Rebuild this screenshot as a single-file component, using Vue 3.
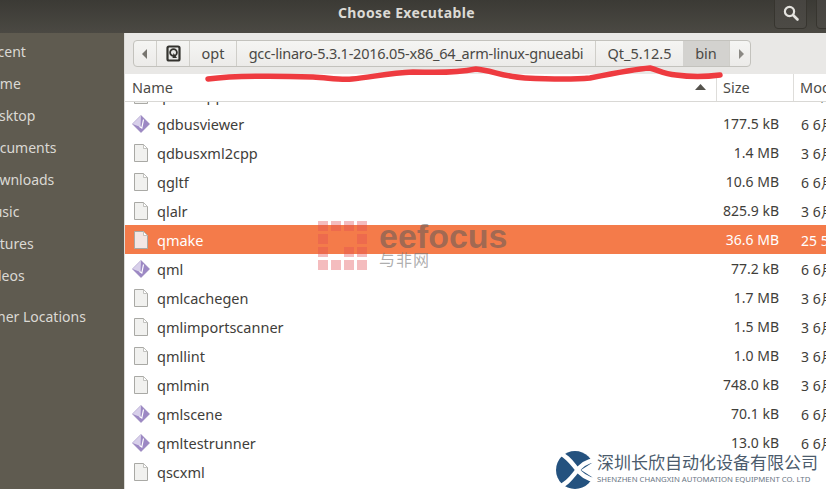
<script setup>
const places = [
  { label: 'Recent' }, { label: 'Home' }, { label: 'Desktop' }, { label: 'Documents' },
  { label: 'Downloads' }, { label: 'Music' }, { label: 'Pictures' }, { label: 'Videos' },
]
const crumbs = [
  { label: 'opt', cls: 'c-opt' },
  { label: 'gcc-linaro-5.3.1-2016.05-x86_64_arm-linux-gnueabi', cls: 'c-gcc' },
  { label: 'Qt_5.12.5', cls: 'c-qt' },
  { label: 'bin', cls: 'c-bin' },
]
const files = [
  { name: 'qdbusviewer', size: '177.5 kB', mod: '6 6月', icon: 'app' },
  { name: 'qdbusxml2cpp', size: '1.4 MB', mod: '3 6月', icon: 'doc' },
  { name: 'qgltf', size: '10.6 MB', mod: '6 6月', icon: 'doc' },
  { name: 'qlalr', size: '825.9 kB', mod: '3 6月', icon: 'doc' },
  { name: 'qmake', size: '36.6 MB', mod: '25 5月', icon: 'doc', selected: true },
  { name: 'qml', size: '77.2 kB', mod: '6 6月', icon: 'app' },
  { name: 'qmlcachegen', size: '1.7 MB', mod: '3 6月', icon: 'doc' },
  { name: 'qmlimportscanner', size: '1.5 MB', mod: '3 6月', icon: 'doc' },
  { name: 'qmllint', size: '1.0 MB', mod: '3 6月', icon: 'doc' },
  { name: 'qmlmin', size: '748.0 kB', mod: '3 6月', icon: 'doc' },
  { name: 'qmlscene', size: '70.1 kB', mod: '6 6月', icon: 'app' },
  { name: 'qmltestrunner', size: '13.0 kB', mod: '6 6月', icon: 'app' },
  { name: 'qscxml', size: '', mod: '', icon: 'doc' },
]
const wmCells = [
  1,1,1,1,
  1,0,0,1,
  1,0,1,1,
  1,1,1,1,
]
</script>

<template>
  <div class="dialog">
    <header class="titlebar">
      <span class="title">Choose Executable</span>
      <button class="tb-btn search">
        <svg width="18" height="18" viewBox="0 0 18 18"><circle cx="7.500" cy="7.500" r="4.600" fill="none" stroke="#e4e3df" stroke-width="2.200"/><path d="M11 11l4.500 4.500" stroke="#e4e3df" stroke-width="2.600" stroke-linecap="round"/></svg>
      </button>
      <button class="tb-btn more"></button>
    </header>
    <div class="body">
      <aside class="sidebar">
        <div class="places">
          <div v-for="p in places" :key="p.label" class="place">{{ p.label }}</div>
        </div>
        <div class="place">Other Locations</div>
      </aside>
      <main class="main">
        <div class="pathwrap">
          <nav class="pathbar">
            <span class="arrow">
              <svg width="8" height="10" viewBox="0 0 8 10"><path d="M6 0v10L1 5z" fill="#77756f"/></svg>
            </span>
            <span class="crumb c-home">
              <svg width="15" height="17" viewBox="0 0 15 17"><rect x="1.500" y="1.500" width="12" height="14" rx="1.500" fill="#e8e8e6" stroke="#33322e" stroke-width="2.200"/><circle cx="7.500" cy="7.500" r="3.400" fill="none" stroke="#33322e" stroke-width="1.800"/><path d="M7.500 8l3.500 5H6.500z" fill="#33322e"/></svg>
            </span>
            <span v-for="c in crumbs" :key="c.label" class="crumb" :class="c.cls">{{ c.label }}</span>
            <span class="arrow next">
              <svg width="8" height="10" viewBox="0 0 8 10"><path d="M2 0v10l5-5z" fill="#8b8984"/></svg>
            </span>
          </nav>
        </div>
        <div class="thead">
          <div class="th name">Name<svg class="sort" width="11" height="6" viewBox="0 0 11 6"><path d="M0 6L5.500 0 11 6z" fill="#55534e"/></svg></div>
          <div class="th size">Size</div>
          <div class="th mod">Modified</div>
        </div>
        <div class="list">
          <div class="row stub">
            <svg class="ic" width="18" height="20" viewBox="0 0 18 20"><path d="M2.500 1.500h9l4 4v13h-13z" fill="#f1f1ef" stroke="#a9a9a5"/></svg>
            <span class="fname">qdbuscpp2xml</span>
            <span class="fsize">1.3 MB</span><span class="fmod">3 6月</span>
          </div>
          <div v-for="f in files" :key="f.name" class="row" :class="{ sel: f.selected }">
            <svg v-if="f.icon === 'doc'" class="ic" width="18" height="20" viewBox="0 0 18 20">
              <path d="M2.500 1.500h9l4 4v13h-13z" :fill="f.selected ? '#f3e6e4' : '#f1f1ef'" stroke="#a9a9a5"/>
              <path d="M11.500 1.500v4h4z" fill="#fff" stroke="#b5b5b1" stroke-width=".8"/>
            </svg>
            <svg v-else class="ic" width="18" height="20" viewBox="0 0 18 20">
              <path d="M9 1.500l8.500 8.500-8.500 8.500L.5 10z" fill="#9c88c4" stroke="#8a76b3" stroke-width=".6"/>
              <path d="M9 1.500L.5 10l8 3z" fill="#d8d0ea"/>
              <path d="M11.500 5.500L9.800 14l-2.300-1.500" fill="none" stroke="#fff" stroke-width="1.200"/>
            </svg>
            <span class="fname">{{ f.name }}</span>
            <span class="fsize">{{ f.size }}</span>
            <span class="fmod">{{ f.mod }}</span>
          </div>
        </div>
      </main>
    </div>

    <svg class="scribble" width="826" height="100" viewBox="0 0 826 100">
      <path d="M208 79C240 75 280 76 313 77C330 78 340 80 352 79C372 77 390 73 413 72C430 72 450 74 476 69C490 70 505 77 525 78C545 79 570 80 590 78C610 74 635 69 650 68C658 70 664 74 676 75C690 77 705 77 720 75" fill="none" stroke="#ee3b40" stroke-width="5.500" stroke-linecap="round"/>
    </svg>

    <div class="wm-eefocus">
      <div class="wm-grid">
        <i v-for="(c, i) in wmCells" :key="i" :class="{ off: !c }"></i>
      </div>
      <div class="wm-words">
        <div class="wm-en">eefocus</div>
        <div class="wm-cn">与非网</div>
      </div>
    </div>

    <div class="wm-company">
      <svg class="wm-logo" width="40" height="40" viewBox="0 0 40 40">
        <circle cx="20" cy="20" r="19" fill="#24527f"/>
        <path d="M26 20L40 11V29z" fill="#fff"/>
        <path d="M2 2C12 6 16 12 21 18C26 25 32 29 40 30" fill="none" stroke="#fff" stroke-width="4.500"/>
        <path d="M2 38C12 34 16 28 21 22C26 15 32 11 40 10" fill="none" stroke="#fff" stroke-width="4.500"/>
      </svg>
      <div class="wm-ctext">
        <div class="wm-ccn">深圳长欣自动化设备有限公司</div>
        <div class="wm-cen">SHENZHEN CHANGXIN AUTOMATION EQUIPMENT CO. LTD</div>
      </div>
    </div>
  </div>
</template>

<style>
html, body { margin: 0; background: #fff; }
</style>
<style scoped>
.dialog {
  position: relative;
  width: 826px;
  height: 489px;
  overflow: hidden;
  display: flex;
  flex-direction: column;
  font-family: "Noto Sans", "Noto Sans CJK SC", sans-serif;
  font-size: 14px;
  color: #3f3e3a;
  background: #fff;
}
.titlebar {
  height: 33px;
  flex: none;
  display: flex;
  align-items: flex-start;
  background: linear-gradient(#3b3a35, #4b4943);
  position: relative;
}
.title {
  position: absolute;
  left: 338px;
  top: 4px;
  font-size: 14px;
  font-weight: 700;
  letter-spacing: .36px;
  line-height: 18px;
  color: #dcdad5;
}
.tb-btn {
  position: absolute;
  top: -4px;
  height: 33px;
  padding: 0;
  border: 1px solid #37352f;
  border-radius: 4px;
  background: linear-gradient(#464440, #4c4a45);
  display: flex;
  align-items: center;
  justify-content: center;
}
.search { left: 774px; width: 33px; }
.more { left: 816px; width: 30px; }
.body { flex: 1; display: flex; min-height: 0; }
.sidebar {
  width: 124px;
  flex: none;
  background: #5f5b50;
  color: #dbd9d4;
  overflow: hidden;
  padding-top: 3px;
  box-sizing: border-box;
}
.place {
  height: 32px;
  line-height: 32px;
  white-space: nowrap;
  font-size: 14px;
  margin-left: -19px;
}
.places { padding-bottom: 9px; }
.main {
  flex: 1;
  min-width: 0;
  display: flex;
  flex-direction: column;
  border-left: 1px solid #dcdbd8;
}
.pathwrap {
  height: 41px;
  flex: none;
  box-sizing: border-box;
  padding: 7px 0 0 8px;
  background: #e9e8e6;
}
.pathbar {
  display: flex;
  height: 27px;
  width: 618px;
  box-sizing: border-box;
  border: 1px solid #c3c2bd;
  border-radius: 4px;
  background: linear-gradient(#f5f5f3, #ecebe9);
}
.arrow {
  width: 22px;
  flex: none;
  display: flex;
  align-items: center;
  justify-content: center;
}
.crumb {
  flex: none;
  box-sizing: border-box;
  border-left: 1px solid #cfcec9;
  text-align: center;
  font-size: 14.5px;
  line-height: 25px;
  white-space: nowrap;
  color: #4a4945;
}
.c-home { width: 33px; display: flex; align-items: center; justify-content: center; }
.c-opt { width: 47px; }
.c-gcc { width: 359px; letter-spacing: -.24px; }
.c-qt { width: 88px; }
.c-bin { width: 46px; background: #d3d2cf; border-left: 0; }
.next { border-left: 1px solid #cfcec9; width: 22px; }
.thead {
  height: 27px;
  flex: none;
  display: flex;
  background: #fff;
  border-bottom: 1px solid #d9d8d5;
  font-size: 14.5px;
  line-height: 27px;
  color: #4c4b47;
}
.th { box-sizing: border-box; white-space: nowrap; flex: none; }
.name {
  width: 591px;
  padding-left: 7px;
  position: relative;
}
.sort { position: absolute; right: 10px; top: 10px; }
.size { width: 77px; padding-left: 6px; border-left: 1px solid #dedddA; }
.mod { padding-left: 6px; border-left: 1px solid #dedddA; }
.list { flex: 1; overflow: hidden; min-height: 0; }
.row {
  height: 29px;
  display: flex;
  align-items: center;
  white-space: nowrap;
  position: relative;
  font-size: 14.5px;
}
.stub { margin-top: -22px; }
.ic { margin-left: 7px; flex: none; }
.fname { margin-left: 7px; width: 543px; flex: none; }
.fsize { width: 79px; flex: none; text-align: right; font-size: 14px; }
.fmod { margin-left: 22px; flex: none; font-size: 14px; }
.sel { background: #f47b4a; color: #fff; }
.scribble { position: absolute; left: 0; top: 0; pointer-events: none; }
.wm-eefocus {
  position: absolute;
  left: 318px;
  top: 221px;
  display: flex;
  gap: 12px;
}
.wm-grid {
  display: grid;
  grid-template-columns: repeat(4, 10px);
  grid-auto-rows: 10px;
  gap: 3px;
}
.wm-grid i { background: rgba(226, 80, 85, .38); }
.wm-grid i.off { background: transparent; }
.wm-en {
  font-family: "Liberation Sans", sans-serif;
  font-size: 34px;
  font-weight: 700;
  line-height: 30px;
  color: rgba(90, 90, 90, .55);
}
.wm-cn { font-size: 16px; line-height: 18px; color: rgba(120, 120, 120, .6); letter-spacing: 1px; }
.wm-company {
  position: absolute;
  left: 555px;
  top: 450px;
  display: flex;
  gap: 2px;
}
.wm-ccn {
  font-size: 17px;
  line-height: 22px;
  margin-top: 2px;
  color: #4b5b6c;
  white-space: nowrap;
}
.wm-cen {
  font-size: 7.75px;
  line-height: 10px;
  white-space: nowrap;
  color: #6a7684;
}
</style>
